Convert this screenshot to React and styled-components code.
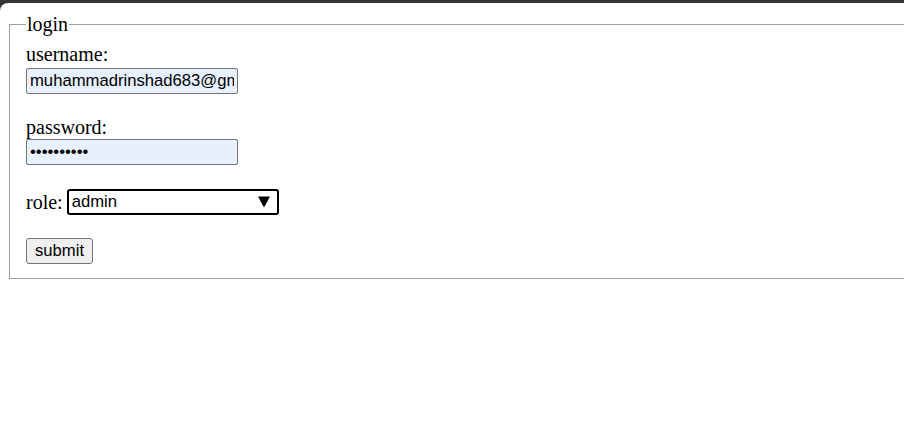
import React from "react";
import styled, { createGlobalStyle } from "styled-components";

const Global = createGlobalStyle`
  html, body { margin: 0; padding: 0; background: #353535; overflow: hidden; }
  body { width: 904px; height: 428px; }
  #root { height: 100%; }
`;

const Frame = styled.div`
  height: 100%;
  padding-top: 3px;
  box-sizing: border-box;
  background: #353535;
`;

const Page = styled.div`
  height: 100%;
  background: #ffffff;
  border-top-left-radius: 8px;
  padding-top: 10px;
  box-sizing: border-box;
  overflow: hidden;
`;

const Fieldset = styled.fieldset`
  margin: 0 0 0 9px;
  width: 1000px;
  border: 1px solid #a0a0a0;
  padding: 7px 16px 14px 16px;
  font-family: "Liberation Serif", "Times New Roman", serif;
  font-size: 20px;
  line-height: 23px;
  color: #000;
`;

const Legend = styled.legend`
  padding: 0 1px;
  font-size: 20px;
  line-height: 23px;
`;

const Form = styled.form`
  display: flex;
  flex-direction: column;
  align-items: flex-start;
`;

const Label = styled.label`
  display: block;
  height: 23px;
  margin-bottom: ${(p) => p.$gap ?? 2}px;
`;

const TextInput = styled.input`
  box-sizing: border-box;
  width: 212px;
  height: 26px;
  margin: 0 0 ${(p) => p.$after ?? 0}px 0;
  padding: 1px 3px;
  border: 1px solid #767676;
  border-radius: 2px;
  background: #e8f0fe;
  font-family: "Liberation Sans", Arial, sans-serif;
  font-size: 16.67px;
  color: #000;
  outline: none;
`;

const Row = styled.div`
  display: flex;
  align-items: center;
  gap: 4px;
  margin-bottom: 23px;
`;

const InlineLabel = styled.label`
  line-height: 23px;
  margin-top: 1px;
`;

const SelectWrap = styled.div`
  position: relative;
  width: 212px;
  height: 26px;
`;

const Select = styled.select`
  appearance: none;
  box-sizing: border-box;
  width: 212px;
  height: 26px;
  margin: 0;
  padding: 0 0 1px 3px;
  border: 2px solid #000;
  border-radius: 3px;
  background: #fff;
  font-family: "Liberation Sans", Arial, sans-serif;
  font-size: 16.67px;
  color: #000;
  outline: none;
`;

const Arrow = styled.span`
  position: absolute;
  right: 9px;
  top: 50%;
  transform: translateY(-50%);
  width: 0;
  height: 0;
  border-left: 6px solid transparent;
  border-right: 6px solid transparent;
  border-top: 11px solid #000;
  pointer-events: none;
`;

const Button = styled.button`
  box-sizing: border-box;
  height: 26px;
  padding: 1px 8px;
  border: 1px solid #767676;
  border-radius: 3px;
  background: #efefef;
  font-family: "Liberation Sans", Arial, sans-serif;
  font-size: 16.67px;
  color: #000;
`;

export default function App() {
  return (
    <>
      <Global />
      <Frame>
        <Page>
          <Fieldset>
            <Legend>login</Legend>
            <Form onSubmit={(e) => e.preventDefault()}>
              <Label htmlFor="u">username:</Label>
              <TextInput id="u" type="text" defaultValue="muhammadrinshad683@gmail.com" $after={22} />
              <Label htmlFor="p" $gap={0}>password:</Label>
              <TextInput id="p" type="password" defaultValue="rinshad123" $after={24} />
              <Row>
                <InlineLabel htmlFor="r">role:</InlineLabel>
                <SelectWrap>
                  <Select id="r" defaultValue="admin">
                    <option value="admin">admin</option>
                    <option value="user">user</option>
                  </Select>
                  <Arrow />
                </SelectWrap>
              </Row>
              <Button type="submit">submit</Button>
            </Form>
          </Fieldset>
        </Page>
      </Frame>
    </>
  );
}
